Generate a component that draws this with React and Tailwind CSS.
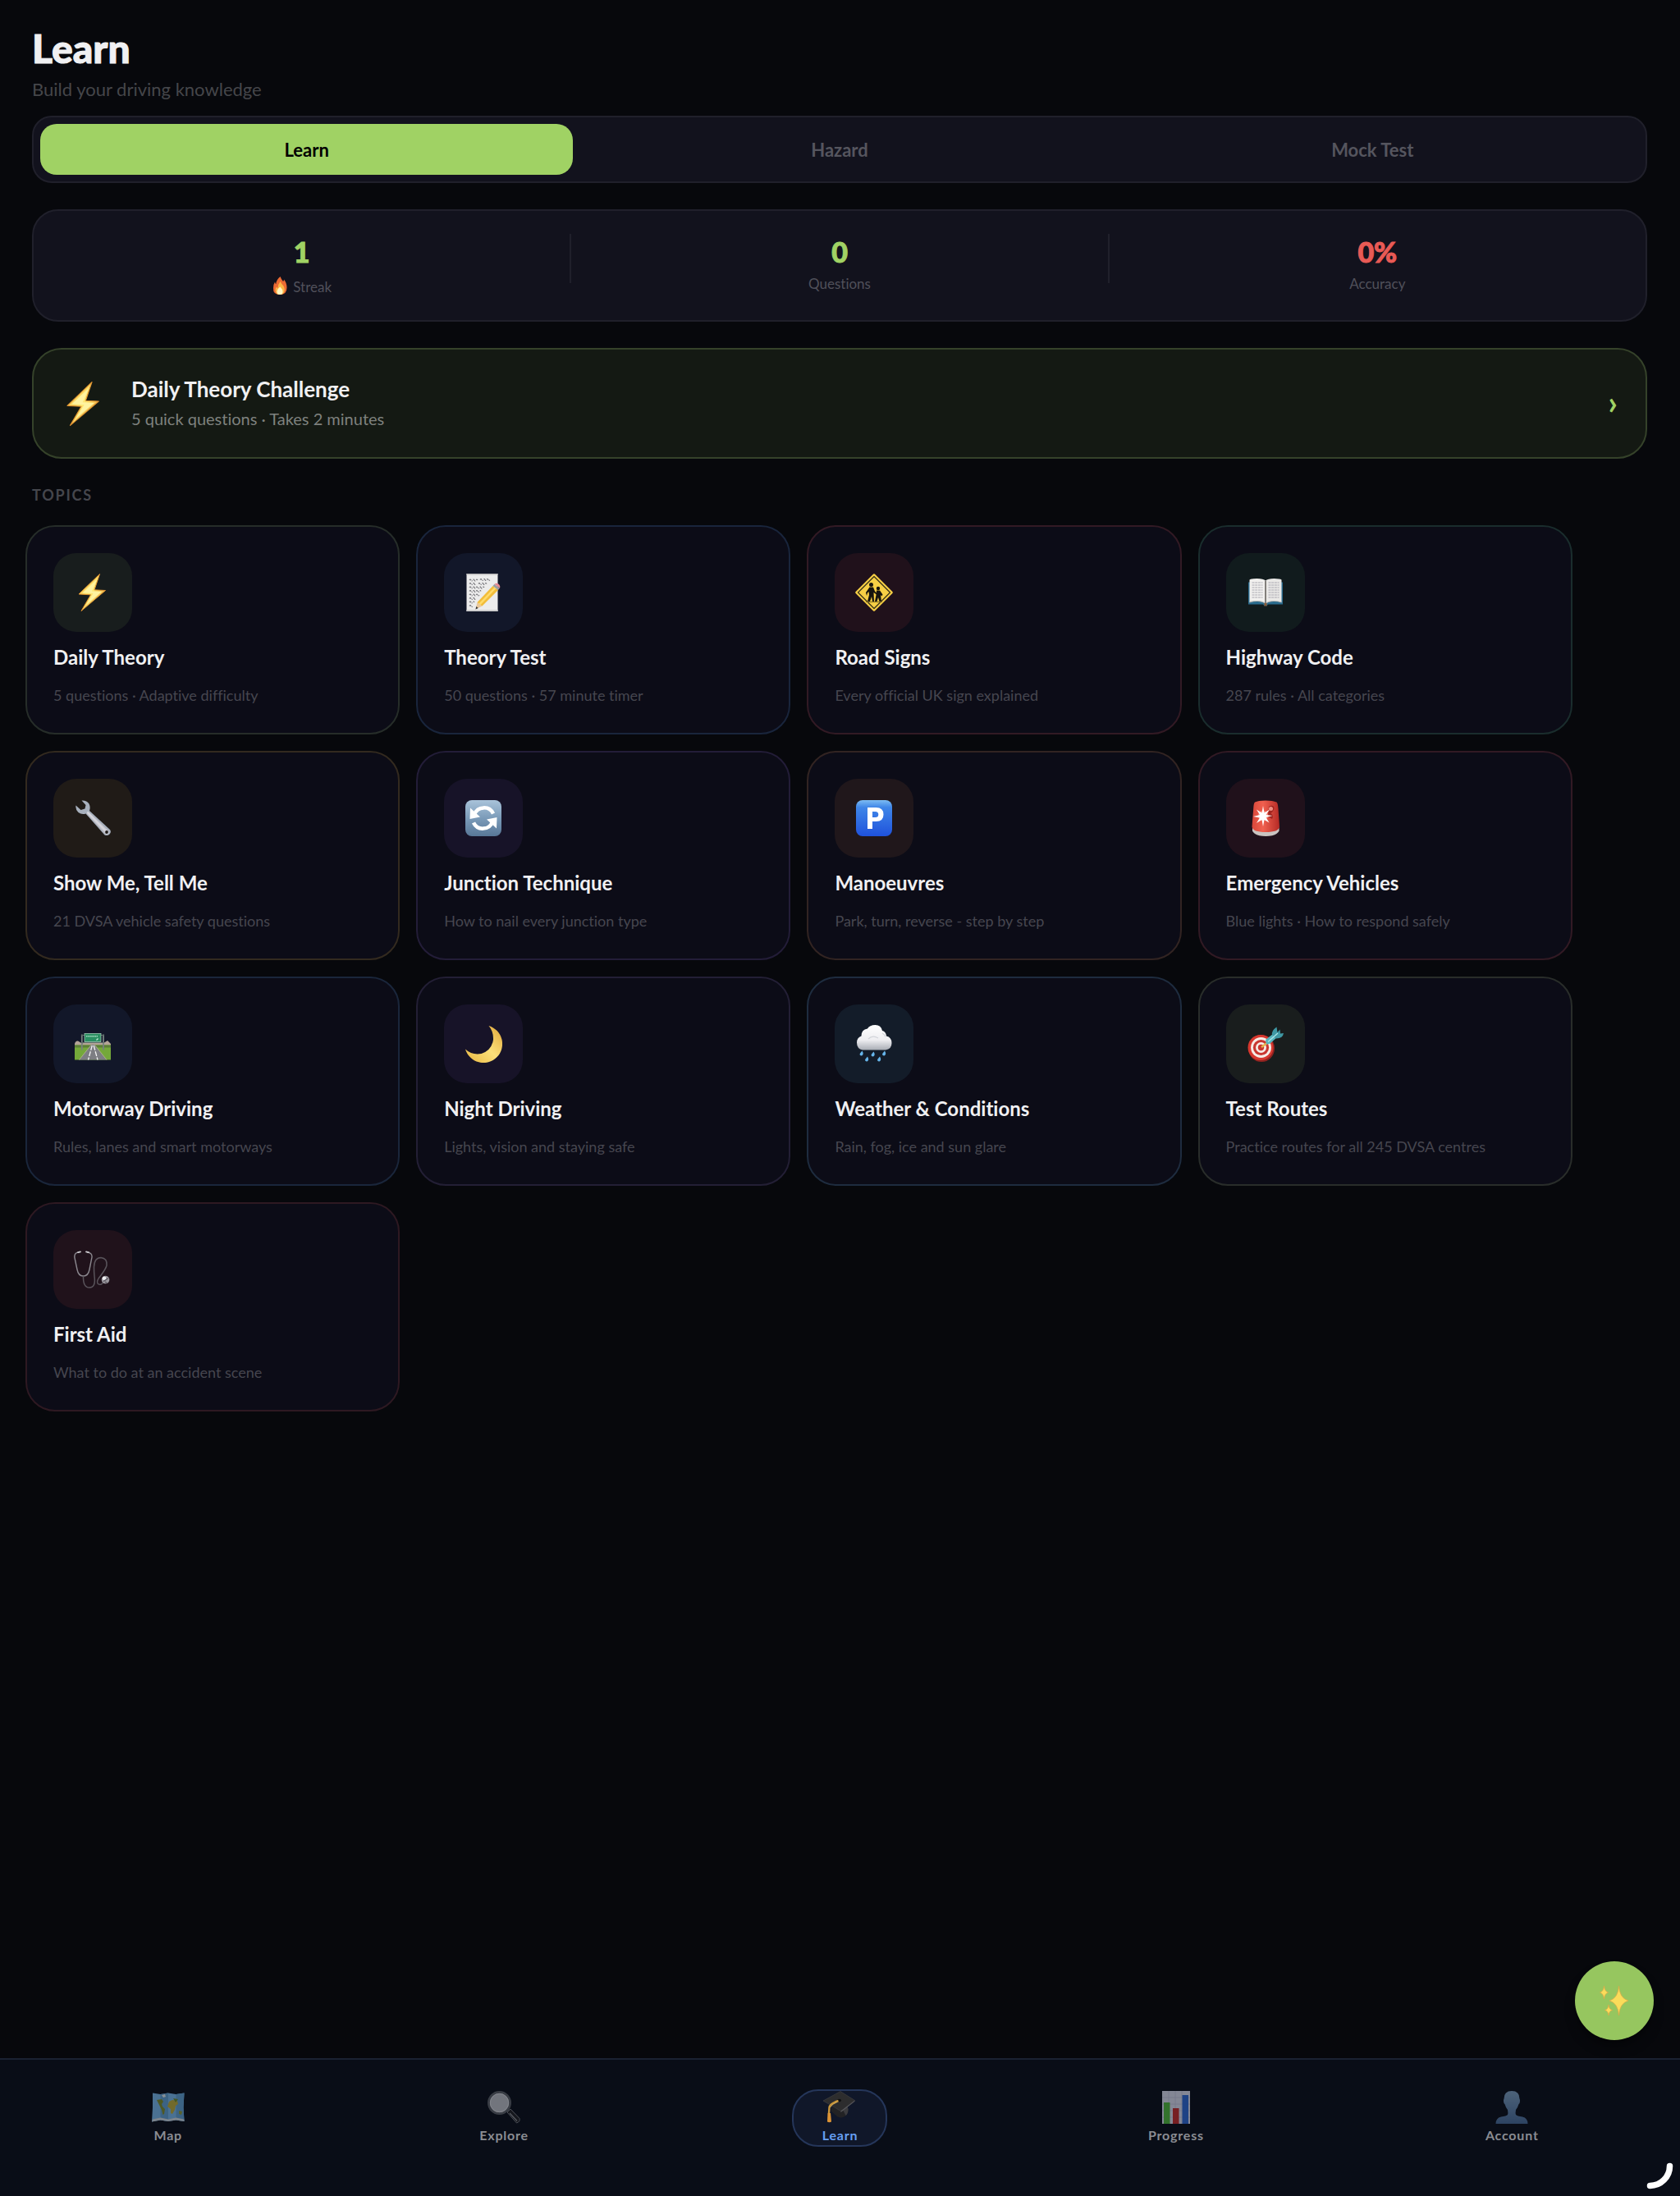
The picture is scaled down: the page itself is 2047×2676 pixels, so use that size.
import { useState } from 'react';

function Bolt({ className }){
  return (
    <svg viewBox="0 0 46 46" className={className} aria-hidden="true">
      <defs>
        <linearGradient id="bolt" x1="0" y1="0" x2="1" y2="1">
          <stop offset="0" stopColor="#f7b93e" /><stop offset="0.5" stopColor="#ffe873" /><stop offset="1" stopColor="#e58f2a" />
        </linearGradient>
      </defs>
      <path d="M31.500 .5 6 25l14.500.8L9 45.500 38.500 20.500 25 19.800z" fill="url(#bolt)" stroke="#dd9130" strokeWidth="1" strokeLinejoin="round" />
      <path d="M28.500 6.500 10.500 23.500l13 .6-8.500 14 19-16-12-.6z" fill="#fff3a0" />
    </svg>
  );
}

function Note({ className }){
  return (
    <svg viewBox="0 0 46 46" className={className} aria-hidden="true">
      <rect x="2.500" y="0" width="38" height="46" fill="#ececec" />
      <rect x="2.500" y="0" width="38" height="1.500" fill="#bdbdbd" />
      <rect x="2.500" y="44" width="38" height="2" fill="#cfcfcf" />
      <g stroke="#6d6d72" strokeWidth="1.100" fill="none" strokeDasharray="3 .8 1.500 1 4 1.200">
        <path d="M6 8q1-2 2 0t2 0 2 0 2 0 2 0M19 7.500q1-2 2 0t2 0 2 0 2 0 2 0 2 0" />
        <path d="M6 12.500q1-2 2 0t2 0 2 0 2 0M17 12.500q1-2 2 0t2 0 2 0 2 0 2 0" />
        <path d="M6 17q1-2 2 0t2 0 2 0 2 0 2 0 2 0 2 0 2 0 2 0" />
        <path d="M6 21.500q1-2 2 0t2 0 2 0 2 0 2 0 2 0 2 0" />
        <path d="M6 26q1-2 2 0t2 0 2 0 2 0 2 0 2 0" />
        <path d="M6 30.500q1-2 2 0t2 0 2 0 2 0" />
        <path d="M6 35q1-2 2 0t2 0 2 0" />
        <path d="M6 39.500q1-2 2 0t2 0" />
      </g>
      <path d="M13.500 43.500l2-8.500 6 4.500z" fill="#e9c79a" />
      <path d="M13.500 43.500l.8-3.400 2.400 1.800z" fill="#333" />
      <path d="M15.500 35 34.500 15l6.500 5-19.500 19.500z" fill="#f2bd3a" />
      <path d="M17.500 36.500 36.500 16.500l2 1.500-19 20z" fill="#ffdb6b" />
      <path d="M34.500 15l2-2.200 6.500 5-2 2.200z" fill="#9b9da0" />
      <path d="M36.500 12.800q2.500-2 5 0t1.500 5z" fill="#e88b93" />
    </svg>
  );
}

function Crossing({ className }){
  return (
    <svg viewBox="0 0 46 46" className={className} aria-hidden="true">
      <path d="M23 1.500 44.500 23 23 44.500 1.500 23z" fill="#f6cf45" stroke="#f6cf45" strokeWidth="2.500" strokeLinejoin="round" />
      <path d="M23 3.500 42.500 23 23 42.500 3.500 23z" fill="none" stroke="#3a3217" strokeWidth="1.300" strokeLinejoin="round" />
      <g fill="#16140e">
        <circle cx="19.500" cy="13.500" r="2.500" />
        <path d="M17.500 16.500h4.500l2 5 3 3-1 1-3.500-2.500.5 11H21l-1-6-2 6h-3l2-8-.5-4-1.500 1.500L14 27l-1-4z" />
        <circle cx="28" cy="18" r="2.200" />
        <path d="M26 20.500h4l3.500 5-1 2-1.500-1.500 1 8h-2.500l-1.500-5-1.500 5H24l1.500-8z" />
      </g>
      <path d="M13 34.500h20" stroke="#8d7622" strokeWidth="1.200" />
    </svg>
  );
}

function Book({ className }){
  return (
    <svg viewBox="0 0 46 46" className={className} aria-hidden="true">
      <path d="M2 10.500h42v27H26q-1 2-3 2t-3-2H2z" fill="#2a6b8d" />
      <path d="M3.500 7.500q2-1.500 9-1.500 8 0 10.500 2.500v28q-4-3-10-3-6 0-9.500 1.500z" fill="#f1f0ee" />
      <path d="M42.500 7.500q-2-1.500-9-1.500-8 0-10.500 2.500v28q4-3 10-3 6 0 9.500 1.500z" fill="#e9e8e6" />
      <path d="M3.500 35q3.500-1.500 9.500-1.500 6 0 10 3 4-3 10-3 6 0 9.500 1.500" fill="none" stroke="#b5b3b0" strokeWidth="1.200" />
      <path d="M23 8.500v28" stroke="#77746f" strokeWidth="1.800" />
      <g stroke="#aaa9b2" strokeWidth="1" strokeDasharray="3 .7">
        <path d="M6.500 11h13M6.500 14h13M6.500 17h13M6.500 20h13M6.500 23h13M6.500 26h13M6.500 29h13" />
        <path d="M26.500 11h13M26.500 14h13M26.500 17h13M26.500 20h13M26.500 23h13M26.500 26h13M26.500 29h13" />
      </g>
      <path d="M21.500 36h3v4l-1.500-1-1.500 1z" fill="#8b5a35" />
    </svg>
  );
}

function Wrench({ className }){
  return (
    <svg viewBox="0 0 46 46" className={className} aria-hidden="true">
      <defs>
        <linearGradient id="wr" x1="0" y1="1" x2="1" y2="0">
          <stop offset="0.3" stopColor="#7b7782" /><stop offset="0.5" stopColor="#d9d9e0" /><stop offset="0.7" stopColor="#85828c" />
        </linearGradient>
      </defs>
      <path d="M9.500 1.500q6-.5 9 4 2 4 .5 8.500L44 37q2 3-.5 5.500t-6 1L14.500 17.500q-5 1.500-9-1.500-4-4-3-8.500l6 5.500 5-1.500 1-4.500z" fill="#a7b0bd" />
      <path d="M17 14.500 42.500 38.500q1 2.500-.8 3.800-2 1.200-3.500 0L15.500 17z" fill="url(#wr)" />
      <circle cx="40" cy="40" r="1.900" fill="#1d1917" />
    </svg>
  );
}

function Refresh({ className }){
  return (
    <svg viewBox="0 0 46 46" className={className} aria-hidden="true">
      <defs>
        <linearGradient id="rf" x1="0" y1="0" x2="0" y2="1">
          <stop offset="0" stopColor="#a9c3da" /><stop offset="0.5" stopColor="#7b9bb9" /><stop offset="1" stopColor="#587797" />
        </linearGradient>
      </defs>
      <rect x="1" y="1" width="44" height="44" rx="8" fill="url(#rf)" />
      <path d="M12 18.500a12.500 12.500 0 0 1 23-1" fill="none" stroke="#fff" strokeWidth="4.500" />
      <path d="M34 27.500a12.500 12.500 0 0 1-23 1" fill="none" stroke="#fff" strokeWidth="4.500" />
      <path d="M7 10.500 19 21.500 6.500 24z" fill="#fff" />
      <path d="M39 35.500 27 24.500 39.500 22z" fill="#fff" />
    </svg>
  );
}

function Parking({ className }){
  return (
    <svg viewBox="0 0 46 46" className={className} aria-hidden="true">
      <defs>
        <linearGradient id="pk" x1="0" y1="0" x2="0" y2="1">
          <stop offset="0" stopColor="#7cbcf3" /><stop offset="0.2" stopColor="#3f86e8" /><stop offset="1" stopColor="#1f52dc" />
        </linearGradient>
      </defs>
      <rect x="1" y="1" width="44" height="44" rx="8" fill="url(#pk)" />
      <path fillRule="evenodd" d="M15 10h10.500q9 0 9 8.500T25.500 27H21v9h-6zM21 15v7h3.500q3.800 0 3.800-3.500T24.500 15z" fill="#fff" />
    </svg>
  );
}

function Siren({ className }){
  return (
    <svg viewBox="0 0 46 46" className={className} aria-hidden="true">
      <defs>
        <linearGradient id="sr" x1="0" y1="0" x2="1" y2="0">
          <stop offset="0" stopColor="#d9473a" /><stop offset="0.4" stopColor="#f0604f" /><stop offset="1" stopColor="#b52a25" />
        </linearGradient>
      </defs>
      <path d="M7 34.500h32.500v4q-3 6.500-16.300 6.500T7 38.500z" fill="#c9c4c1" />
      <path d="M10 3.500Q14 1.500 23 1.500t13.500 2q1.500 1 2 8l1.500 22q-1 6.500-16.800 6.500T6.500 33.500l1.700-22q.3-7 1.800-8z" fill="url(#sr)" />
      <path d="M27 9q5-3 6.500 1 0 4-4 7 4 3 1.500 7l-5-3z" fill="#a2251f" />
      <circle cx="29.500" cy="11.500" r="2.500" fill="#ef8f83" />
      <circle cx="20" cy="20" r="6" fill="#ff9d8f" opacity=".8" />
      <path d="M20 8l1.500 8.500 6.500-4-4.500 6.500 8 1-8 2 4 6.500-6-3.500L20 33l-1.500-8-6.500 4 4-6.500-8-1.500 8-2-4-6.500 6.500 4z" fill="#fff" />
    </svg>
  );
}

function Motorway({ className }){
  return (
    <svg viewBox="0 0 46 46" className={className} aria-hidden="true">
      <path d="M1 23q1-4 4-3.500l5 3 5-1.500 8 1 9-1 5 .5 4-2.500 4 4v2H1z" fill="#b3a497" />
      <path d="M1 24.500h44V42.500H1z" fill="#74a83a" />
      <path d="M1 24.500h44v3H1z" fill="#5c7f37" />
      <path d="M21 24h4.500l14.500 18.500H6.500z" fill="#7d7e83" />
      <path d="M22.300 25 17.500 42.500M24.200 25 29 42.500" stroke="#f3f3f3" strokeWidth="1.300" strokeDasharray="6 1.500" />
      <path d="M21 24.500 6.500 42.500M25.500 24.500 40 42.500" stroke="#b5bb8b" strokeWidth=".8" />
      <path d="M9.800 11.500v19M36 11.500v19" stroke="#77807f" strokeWidth="1.800" />
      <path d="M9 12.500h28M9 21.500h28" stroke="#5f6b68" strokeWidth="1" />
      <rect x="13" y="10.500" width="20" height="10" fill="#2b8f62" stroke="#9fc9b4" strokeWidth=".8" />
      <path d="M15 13.800h14" stroke="#a5dcc0" strokeWidth="1.500" strokeDasharray="1.500 .6" />
      <path d="M27.500 18.500l2-2" stroke="#c5eeda" strokeWidth="1.300" />
    </svg>
  );
}

function Moon({ className }){
  return (
    <svg viewBox="0 0 46 46" className={className} aria-hidden="true">
      <defs>
        <linearGradient id="mn" x1="0" y1="1" x2="1" y2="0">
          <stop offset="0" stopColor="#e8b53f" /><stop offset="0.5" stopColor="#fbe07a" /><stop offset="1" stopColor="#e0a437" />
        </linearGradient>
      </defs>
      <path d="M29.500 1A23 23 0 1 1 1 29.500q8 7.500 19.500 5.500Q33 31 35 18 35.500 8 29.500 1z" fill="url(#mn)" />
    </svg>
  );
}

function Rain({ className }){
  return (
    <svg viewBox="0 0 46 46" className={className} aria-hidden="true">
      <defs>
        <linearGradient id="cl" x1="0" y1="0" x2="0" y2="1">
          <stop offset="0" stopColor="#ffffff" /><stop offset="0.6" stopColor="#eeeef1" /><stop offset="1" stopColor="#a9adb5" />
        </linearGradient>
      </defs>
      <path d="M9 30.500q-7-1.500-7-9 0-6 5.500-8 0-8 7.500-9Q17.500 0 24.500 0q7 0 8.500 7 4.500 1 5 6.500 6.500 1.500 6.500 8.500 0 7.500-7.500 8.500z" fill="url(#cl)" />
      <path d="M16 17q5-5 12-1M33 10q3 1.500 4 4.500" stroke="#d3d5da" strokeWidth="1.200" fill="none" />
      <g fill="#66b5ea">
        <path d="M8.500 31.500q2.500 4.500-.5 6-3.500-.5-2-3z" /><path d="M22.500 32.500q2.500 4.500-.5 6-3.500-.5-2-3z" /><path d="M36 31.500q2.500 4.500-.5 6-3.500-.5-2-3z" />
        <path d="M15 38.500q2.500 4.500-.5 6-3.500-.5-2-3z" /><path d="M30 38.500q2.500 4.500-.5 6-3.500-.5-2-3z" />
      </g>
    </svg>
  );
}

function Target({ className }){
  return (
    <svg viewBox="0 0 46 46" className={className} aria-hidden="true">
      <ellipse cx="18" cy="28.500" rx="16" ry="16.500" fill="#8f2320" />
      <ellipse cx="17" cy="27.500" rx="15.500" ry="15.500" fill="#d6382f" />
      <circle cx="17.500" cy="27.500" r="12.500" fill="#f6ece6" />
      <circle cx="17.500" cy="27.500" r="9.600" fill="#c93730" />
      <circle cx="17.500" cy="27.500" r="6.500" fill="#f6ece6" />
      <circle cx="17.500" cy="27.500" r="3.700" fill="#c93730" />
      <path d="M18 27 29 19" stroke="#e7b54c" strokeWidth="2.400" />
      <path d="M24 23.500 23 18l9-7 4 5-8 7z" fill="#57b4bd" />
      <path d="M31 12q-1-5 5.500-9.500l1 6.500 3-3.500.5 5 4-.5q-1 6.500-9 6.500z" fill="#3f98a4" />
      <path d="M26 20.500 38 10" stroke="#a9e3e6" strokeWidth="1.400" />
    </svg>
  );
}

function Stethoscope({ className }){
  return (
    <svg viewBox="0 0 46 46" className={className} aria-hidden="true">
      <path d="M6.500 2Q.5 2 .8 8L4 23q1.500 8 7.500 8t7.500-8l3-15q.5-5.500-6-6" fill="none" stroke="#8b888f" strokeWidth="1.400" />
      <path d="M11.500 31q-.5 14 7.500 14 8 0 6-14-.5-5-.5-11Q25 8.500 33 8.500q8 1 7 9.500-1 4-7 12-6 7-4 10 4 3.500 7-2" fill="none" stroke="#59545b" strokeWidth="1.500" />
      <path d="M5 2.200l3-.8M15 1.400l3 .8" stroke="#c9c7cc" strokeWidth="1.800" strokeLinecap="round" />
      <circle cx="38.500" cy="35.500" r="4.800" fill="#9a979e" />
      <circle cx="37" cy="33.800" r="2.300" fill="#ededf0" />
      <path d="M36 37.500l6-4M38 38l2.500 1.500" stroke="#55515a" strokeWidth="1.200" />
    </svg>
  );
}

function Flame({ className }){
  return (
    <svg viewBox="0 0 20 22" className={className} aria-hidden="true">
      <path d="M10.500 0q1 3 3.500 6 1-1 1-2.500 3.500 4.500 3.500 10Q18.500 22 10 22T2 14q0-4.500 2-7.500.3 2 1.300 2.700Q5.500 4 10.500 0z" fill="#ec6a33" />
      <path d="M10.500 6q1.500 3 4 5.500Q16 14 15.800 16.500 15 22 10 22t-5.500-5.500q0-2.500 1.500-4 .5 1.500 1.500 1.500Q8 9 10.500 6z" fill="#fcb545" />
      <path d="M10.300 12.500q3.200 3 3.200 6 0 3.500-3.500 3.500t-3.500-3.500q0-3 3.800-6z" fill="#fff6c4" />
    </svg>
  );
}

function Sparkles({ className }){
  return (
    <svg viewBox="0 0 36 36" className={className} aria-hidden="true">
      <g fill="#fbdc5a" stroke="#dfa747" strokeWidth=".7" strokeLinejoin="round">
        <path d="M23.500 0Q24.500 15 35 18 24.500 21 23.500 36 22.500 21 12 18 22.500 15 23.500 0z" />
        <path d="M5.500 0Q6 6.500 10.500 8 6 9.500 5.500 16 5 9.500 .5 8 5 6.500 5.500 0z" />
        <path d="M11 23Q11.500 28.500 15.500 29.500 11.500 30.500 11 36 10.500 30.500 6.500 29.500 10.500 28.500 11 23z" />
      </g>
    </svg>
  );
}

function WorldMap({ className }){
  return (
    <svg viewBox="0 0 40 40" className={className} aria-hidden="true">
      <path d="M1 2.500 10.500 4 20 2.500 29.500 4 39.500 2.500 38.500 20l1 17-10-1.500L20 37l-9.500-1.500L0 37.500 1 20z" fill="#76b4e6" />
      <path d="M10.500 4 20 2.500V37l-9.500-1.500zM29.500 4l10-1.500-1 17.500 1 17-10-1.500z" fill="#5f9ccd" />
      <path d="M1 34.500l9.500-2 9.500 2 9.500-2 9.700 2 .3 2.500-10-1.500L20 37l-9.500-1.500L0 37.500z" fill="#c9d3db" />
      <path d="M6 11l6-1 2 3-2 3 1 3 3 3-1 6-1.500 1-1.500-6-2-4z" fill="#7d8a2c" />
      <path d="M21 13l4-2 6 1 1 4-3 2-1 5-3 5-2-1v-5l-4-3z" fill="#b8a83a" />
      <path d="M12 5l4-1 1 3-3 1z" fill="#dde6ea" />
      <path d="M33 24l4 1-1 4-3-1z" fill="#8f9a34" />
      <path d="M26 9l6 1-3 4z" fill="#6f8a2c" />
    </svg>
  );
}

function Magnifier({ className }){
  return (
    <svg viewBox="0 0 40 40" className={className} aria-hidden="true">
      <path d="M24 26l4-4 11 11.500q1 4-3.500 5.500z" fill="#1d1e22" stroke="#777a80" strokeWidth="1" />
      <path d="M27 27 36 36.500" stroke="#8b8e94" strokeWidth="1.200" />
      <circle cx="14.500" cy="14.500" r="13" fill="#b9bbc1" stroke="#5a5d64" strokeWidth="3" />
      <circle cx="14.500" cy="14.500" r="11.200" fill="none" stroke="#dfe1e6" strokeWidth=".8" />
    </svg>
  );
}

function GradCap({ className }){
  return (
    <svg viewBox="0 0 40 40" className={className} aria-hidden="true">
      <path d="M10 19l12 5 7-6 1.500 4q0 7-5 9.500-5 2-8.500-.5L10 25z" fill="#222224" />
      <path d="M24 23l5.500-4.500 1 3.500q0 6-3 8z" fill="#3b3b3e" />
      <path d="M21 .5 38.500 11.500 21.500 24.500 0 12z" fill="#2d2d2e" stroke="#444446" strokeWidth=".6" strokeLinejoin="round" />
      <path d="M21.500 24.500 38.500 11.500v1.300L21.500 26z" fill="#5a5a5d" />
      <ellipse cx="19.500" cy="11.500" rx="2.600" ry="1.800" fill="#101011" />
      <path d="M18.500 12Q8.500 15 7.500 20L7 27" fill="none" stroke="#c9963b" strokeWidth="2.400" />
      <path d="M17.500 13.200Q10.500 16 8.500 20" fill="none" stroke="#f0c566" strokeWidth=".8" />
      <path d="M5.500 27h3.500l1 10.500q-2.500 1.500-5 0z" fill="#dc9335" />
    </svg>
  );
}

function BarChart({ className }){
  return (
    <svg viewBox="0 0 40 40" className={className} aria-hidden="true">
      <rect x="3" y="0" width="34" height="40" fill="#d6d8ea" />
      <path d="M3 8h34M3 16h34M3 24h34M3 32h34M11 0v40M19 0v40M27 0v40" stroke="#bcbfd4" strokeWidth=".8" />
      <rect x="5" y="14" width="7.500" height="26" fill="#4fb53b" />
      <rect x="16" y="21" width="7.500" height="19" fill="#c02b2b" />
      <rect x="27.500" y="5" width="7.500" height="35" fill="#2c66cf" />
    </svg>
  );
}

function Person({ className }){
  return (
    <svg viewBox="0 0 40 40" className={className} aria-hidden="true">
      <defs>
        <linearGradient id="ps" x1="0" y1="0" x2="0" y2="1">
          <stop offset="0" stopColor="#7c9dbd" /><stop offset="1" stopColor="#466894" />
        </linearGradient>
      </defs>
      <path d="M20 0q9.500 0 9.500 9.500.8 1 .4 4-.4 2-1.400 2.500-1.500 5-3.500 7-.8 4 0 6 1.500 1.500 8 2.500 6.500 1.500 6.500 8.500H.5q0-7 6.500-8.500 6.500-1 8-2.500.8-2 0-6-2-2-3.500-7-1-.5-1.400-2.500-.4-3 .4-4Q10.500 0 20 0z" fill="url(#ps)" />
    </svg>
  );
}

const TABS = ['Learn', 'Hazard', 'Mock Test'];

const TOPICS = [
  { name: 'Daily Theory', text: '5 questions · Adaptive difficulty', icon: Bolt, border: 'border-[#262d29]', tile: 'bg-[#181d1d]' },
  { name: 'Theory Test', text: '50 questions · 57 minute timer', icon: Note, border: 'border-[#19253c]', tile: 'bg-[#121729]' },
  { name: 'Road Signs', text: 'Every official UK sign explained', icon: Crossing, border: 'border-[#321a24]', tile: 'bg-[#20111b]' },
  { name: 'Highway Code', text: '287 rules · All categories', icon: Book, border: 'border-[#1a2d2d]', tile: 'bg-[#111b1d]' },
  { name: 'Show Me, Tell Me', text: '21 DVSA vehicle safety questions', icon: Wrench, border: 'border-[#332a1f]', tile: 'bg-[#201b17]' },
  { name: 'Junction Technique', text: 'How to nail every junction type', icon: Refresh, border: 'border-[#231d38]', tile: 'bg-[#171328]' },
  { name: 'Manoeuvres', text: 'Park, turn, reverse - step by step', icon: Parking, border: 'border-[#322422]', tile: 'bg-[#20171b]' },
  { name: 'Emergency Vehicles', text: 'Blue lights · How to respond safely', icon: Siren, border: 'border-[#321a24]', tile: 'bg-[#20111b]' },
  { name: 'Motorway Driving', text: 'Rules, lanes and smart motorways', icon: Motorway, border: 'border-[#1a263b]', tile: 'bg-[#121729]' },
  { name: 'Night Driving', text: 'Lights, vision and staying safe', icon: Moon, border: 'border-[#231f35]', tile: 'bg-[#171328]' },
  { name: 'Weather & Conditions', text: 'Rain, fog, ice and sun glare', icon: Rain, border: 'border-[#1e2c3f]', tile: 'bg-[#131c29]' },
  { name: 'Test Routes', text: 'Practice routes for all 245 DVSA centres', icon: Target, border: 'border-[#292d2a]', tile: 'bg-[#191d1d]' },
  { name: 'First Aid', text: 'What to do at an accident scene', icon: Stethoscope, border: 'border-[#2e1922]', tile: 'bg-[#20121b]' },
];

const NAV = [
  { name: 'Map', icon: WorldMap },
  { name: 'Explore', icon: Magnifier },
  { name: 'Learn', icon: GradCap },
  { name: 'Progress', icon: BarChart },
  { name: 'Account', icon: Person },
];

function Stat({ value, color, children }){
  return (
    <div className="flex-1">
      <div className={`text-[34px] leading-[43px] font-black [-webkit-text-stroke:1px] ${color}`}>{value}</div>
      <div className="mt-1.5 flex items-center justify-center gap-1.5 text-[17px] leading-6 text-[#50505a]">{children}</div>
    </div>
  );
}

function TopicCard({ topic }){
  const Icon = topic.icon;
  return (
    <button className={`flex flex-col items-start text-left rounded-[36px] border-2 bg-[#0c0c17] p-8 ${topic.border}`}>
      <span className={`flex items-center justify-center size-24 rounded-[28px] ${topic.tile}`}>
        <Icon className="size-[46px]" />
      </span>
      <span className="mt-4 text-[24px] leading-[30px] font-bold text-[#f0f0f2]">{topic.name}</span>
      <span className="mt-[18px] text-[18px] leading-[27px] text-[#46464f]">{topic.text}</span>
    </button>
  );
}

export default function App(){
  const [tab, setTab] = useState('Learn');
  const [page, setPage] = useState('Learn');

  return (
    <div className="min-h-screen flex flex-col bg-[#07080c] text-[#f0f0f2] font-['Lato',sans-serif] [font-variant-ligatures:no-common-ligatures]">
      <main className="flex-1 pt-[31px] pl-[31px] pr-8">
        <header className="mx-2">
          <h1 className="text-[48px] leading-[56px] font-black [-webkit-text-stroke:1px]">Learn</h1>
          <p className="mt-2 text-[22px] leading-7 text-[#45464a]">Build your driving knowledge</p>
        </header>

        <div className="mx-2 mt-[18px] flex rounded-3xl border-2 border-[#20202b] bg-[#12121d] p-2">
          {TABS.map(t => (
            <button key={t} onClick={()=>setTab(t)} className={`flex-1 h-[62px] rounded-[20px] text-[22px] font-bold ${t===tab ? 'bg-[#a0d264] text-black' : 'text-[#55555e]'}`}>{t}</button>
          ))}
        </div>

        <section className="mx-2 mt-8 flex items-start rounded-[32px] border-2 border-[#20202b] bg-[#12121d] py-7 text-center">
          <Stat value="1" color="text-[#a0d264]"><Flame className="w-5 h-[22px]" /><span className="pt-1">Streak</span></Stat>
          <div className="w-0.5 h-[60px] bg-[#20202b]" />
          <Stat value="0" color="text-[#a0d264]">Questions</Stat>
          <div className="w-0.5 h-[60px] bg-[#20202b]" />
          <Stat value="0%" color="text-[#e85a55]">Accuracy</Stat>
        </section>

        <div className="mx-2 mt-8 flex">
          <button className="flex-1 flex items-center gap-[31px] rounded-[36px] border-2 border-[#35422a] bg-[#141913] py-8 pl-[34px] pr-[34px] text-left">
            <Bolt className="size-[54px]" />
            <span className="flex-1 flex flex-col gap-1.5">
              <span className="text-[26px] leading-8 font-bold">Daily Theory Challenge</span>
              <span className="text-[20px] leading-[29px] text-[#7e817e]">5 quick questions · Takes 2 minutes</span>
            </span>
            <span className="pb-1 text-[40px] leading-10 font-bold text-[#a0d264]">›</span>
          </button>
        </div>

        <h2 className="mx-2 mt-8 text-[18px] leading-6 font-bold tracking-widest text-[#45464c]">TOPICS</h2>

        <div className="mt-[25px] mb-8">
          <div className="w-[95%] grid grid-cols-4 gap-5">
            {TOPICS.map(t => <TopicCard key={t.name} topic={t} />)}
          </div>
        </div>
      </main>

      <nav className="grid grid-cols-5 justify-items-center border-t-2 border-[#1a2232] bg-[#090d17] pt-9 pb-[60px]">
        {NAV.map(({ name, icon: Icon }) => (
          <button key={name} onClick={()=>setPage(name)} className={`flex flex-col items-center w-[116px] pb-0.5 rounded-[32px] border-2 ${name===page ? 'border-[#25365a] bg-[#101729]' : 'border-transparent'}`}>
            <Icon className={name===page ? 'size-10' : 'size-10 opacity-60'} />
            <span className={`mt-1 text-[16px] leading-5 font-bold tracking-wider ${name===page ? 'text-[#669ff2]' : 'text-[#8a8c92]'}`}>{name}</span>
          </button>
        ))}
      </nav>

      <button aria-label="Assistant" className="fixed right-8 bottom-[190px] flex items-center justify-center size-24 rounded-full bg-[#96c65f] shadow-lg shadow-black/40">
        <Sparkles className="size-9" />
      </button>

      <svg viewBox="0 0 34 34" className="fixed right-2 bottom-2 size-[34px]" fill="none" aria-hidden="true">
        <path d="M29.500 5.500A24 24 0 0 1 5.500 29.500" stroke="#fff" strokeWidth="7.500" strokeLinecap="round" />
      </svg>
    </div>
  );
}
